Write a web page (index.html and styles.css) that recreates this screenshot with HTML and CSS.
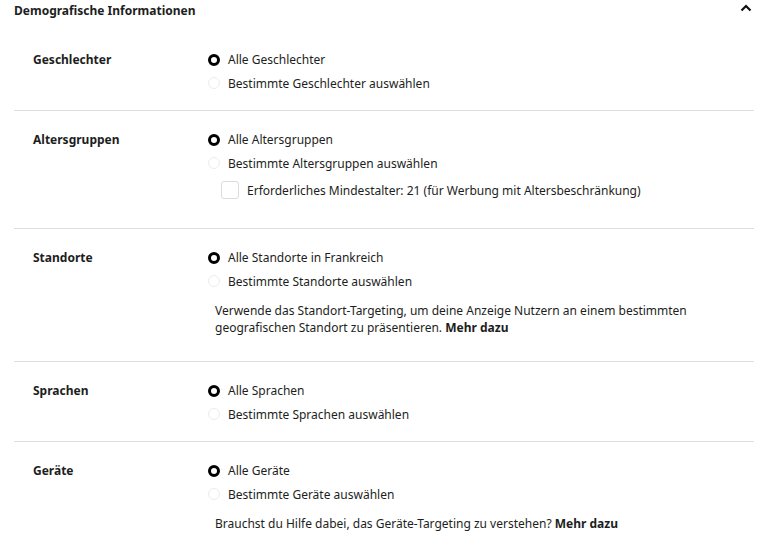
FILE: index.html
```html
<!DOCTYPE html>
<html lang="de">
<head>
    <meta charset="UTF-8">
    <meta name="viewport" content="width=device-width, initial-scale=1.0">
    <title>Demografische Informationen</title>
    <link rel="stylesheet" href="styles.css">
</head>
<body>
    <div class="panel">
        <div class="panel-head">
            <h2>Demografische Informationen</h2>
            <svg class="chevron" width="12" height="8" viewBox="0 0 12 8">
                <path d="M1.5 6.5 L6 2 L10.5 6.5" fill="none" stroke="#111" stroke-width="2.2"/>
            </svg>
        </div>

        <div class="section">
            <div class="label">Geschlechter</div>
            <div class="options">
                <div class="option"><span class="radio checked"></span>Alle Geschlechter</div>
                <div class="option"><span class="radio"></span>Bestimmte Geschlechter auswählen</div>
            </div>
        </div>

        <div class="section">
            <div class="label">Altersgruppen</div>
            <div class="options">
                <div class="option"><span class="radio checked"></span>Alle Altersgruppen</div>
                <div class="option"><span class="radio"></span>Bestimmte Altersgruppen auswählen</div>
                <div class="check-row"><span class="checkbox"></span>Erforderliches Mindestalter: 21 (für Werbung mit Altersbeschränkung)</div>
            </div>
        </div>

        <div class="section">
            <div class="label">Standorte</div>
            <div class="options">
                <div class="option"><span class="radio checked"></span>Alle Standorte in Frankreich</div>
                <div class="option"><span class="radio"></span>Bestimmte Standorte auswählen</div>
                <p class="hint">Verwende das Standort-Targeting, um deine Anzeige Nutzern an einem bestimmten<br>geografischen Standort zu präsentieren. <b>Mehr dazu</b></p>
            </div>
        </div>

        <div class="section">
            <div class="label">Sprachen</div>
            <div class="options">
                <div class="option"><span class="radio checked"></span>Alle Sprachen</div>
                <div class="option"><span class="radio"></span>Bestimmte Sprachen auswählen</div>
            </div>
        </div>

        <div class="section">
            <div class="label">Geräte</div>
            <div class="options">
                <div class="option"><span class="radio checked"></span>Alle Geräte</div>
                <div class="option"><span class="radio"></span>Bestimmte Geräte auswählen</div>
                <p class="hint">Brauchst du Hilfe dabei, das Geräte-Targeting zu verstehen? <b>Mehr dazu</b></p>
            </div>
        </div>
    </div>
</body>
</html>
```

FILE: styles.css
```css
* {
    margin: 0;
    padding: 0;
    box-sizing: border-box;
}
body {
    font-family: "Noto Sans", "Open Sans", sans-serif;
    font-size: 12px;
    color: #1c1e21;
    background: #fff;
}
.panel {
    margin: 0 10px 0 14px;
}
.panel-head {
    display: flex;
    justify-content: space-between;
    align-items: flex-start;
    height: 31px;
}
.panel-head h2 {
    font-size: 12px;
    font-weight: 700;
    line-height: 21px;
}
.chevron {
    margin: 4px 2px 0 0;
}
.section {
    display: grid;
    grid-template-columns: 175px 1fr;
    padding: 17px 0 15px 19px;
    border-top: 1px solid #dedede;
}
.section:nth-child(2) {
    border-top: none;
}
.label {
    font-weight: 700;
    line-height: 23.5px;
}
.option {
    display: flex;
    align-items: center;
    gap: 8px;
    height: 23.5px;
}
.radio {
    width: 12px;
    height: 12px;
    border-radius: 50%;
    border: 1px solid #ececec;
}
.radio.checked {
    border: 3.5px solid #000;
}
.check-row {
    display: flex;
    align-items: center;
    gap: 8px;
    height: 26px;
    margin: 2px 0 10px 13px;
}
.checkbox {
    width: 18px;
    height: 18px;
    border: 1px solid #dcdcdc;
    border-radius: 3px;
}
.hint {
    margin: 9px 0 10px 7px;
    line-height: 17px;
}
.hint b {
    font-weight: 700;
}
```
